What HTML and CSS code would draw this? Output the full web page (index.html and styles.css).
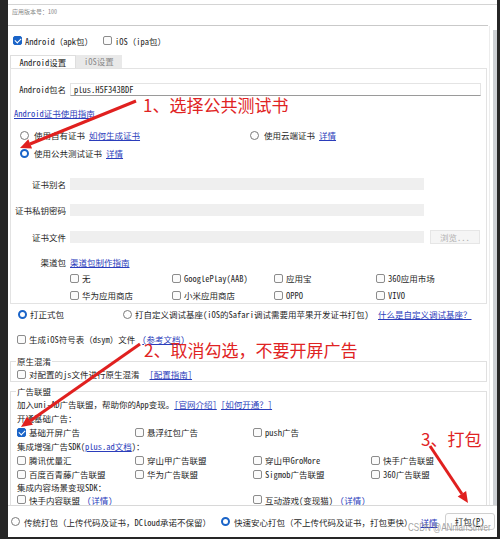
FILE: index.html
```html
<!DOCTYPE html>
<html>
<head>
    <meta charset="utf-8">
    <link rel="stylesheet" href="styles.css">
</head>
<body>
<div class="screen">
    <div class="dialog">
        <div class="top-edge"></div>
        <div class="version">应用版本号：100</div>

        <div class="scroll-area">
            <div class="scroll-content">
                <div class="platforms">
                    <span class="opt"><span class="cb on"></span>Android（apk包）</span>
                    <span class="opt"><span class="cb"></span>iOS（ipa包）</span>
                </div>

                <div class="tabs">
                    <div class="tab active">Android设置</div>
                    <div class="tab">iOS设置</div>
                </div>

                <div class="panel">
                    <div class="field">
                        <span class="flabel">Android包名</span>
                        <span class="input">plus.H5F343BDF</span>
                    </div>

                    <div class="guide"><a class="link">Android证书使用指南</a></div>

                    <div class="cert-row first">
                        <span class="opt wide"><span class="rd"></span>使用自有证书 <a class="link">如何生成证书</a></span>
                        <span class="opt"><span class="rd"></span>使用云端证书 <a class="link">详情</a></span>
                    </div>
                    <div class="cert-row second">
                        <span class="opt"><span class="rd on"></span>使用公共测试证书 <a class="link">详情</a></span>
                    </div>

                    <div class="field off alias">
                        <span class="flabel">证书别名</span>
                        <span class="input disabled"></span>
                    </div>
                    <div class="field off pwd">
                        <span class="flabel">证书私钥密码</span>
                        <span class="input disabled"></span>
                    </div>
                    <div class="field off file">
                        <span class="flabel">证书文件</span>
                        <span class="input disabled"></span>
                        <span class="btn-browse">浏览...</span>
                    </div>

                    <div class="field channel">
                        <span class="flabel">渠道包</span>
                        <a class="link">渠道包制作指南</a>
                    </div>
                    <div class="channels">
                        <span class="opt"><span class="cb"></span>无</span>
                        <span class="opt"><span class="cb"></span>GooglePlay(AAB)</span>
                        <span class="opt"><span class="cb"></span>应用宝</span>
                        <span class="opt"><span class="cb"></span>360应用市场</span>
                        <span class="opt"><span class="cb"></span>华为应用商店</span>
                        <span class="opt"><span class="cb"></span>小米应用商店</span>
                        <span class="opt"><span class="cb"></span>OPPO</span>
                        <span class="opt"><span class="cb"></span>VIVO</span>
                    </div>
                </div>

                <div class="build-row">
                    <span class="opt release"><span class="rd on"></span>打正式包</span>
                    <span class="opt custom"><span class="rd"></span>打自定义调试基座(iOS的Safari调试需要用苹果开发证书打包)</span>
                    <a class="link">什么是自定义调试基座？</a>
                </div>

                <div class="dsym-row">
                    <span class="opt"><span class="cb"></span>生成iOS符号表（dsym）文件</span>
                    <a class="link">(参考文档)</a>
                </div>

                <fieldset class="group obfuscate">
                    <legend>原生混淆</legend>
                    <div class="line">
                        <span class="opt"><span class="cb"></span>对配置的js文件进行原生混淆</span>
                        <a class="link">[配置指南]</a>
                    </div>
                </fieldset>

                <fieldset class="group ads">
                    <legend>广告联盟</legend>
                    <div class="line">加入uni-AD广告联盟，帮助你的App变现。<a class="link">[官网介绍]</a> <a class="link">[如何开通？]</a></div>
                    <div class="line">开通基础广告：</div>
                    <div class="ad-grid">
                        <span class="opt"><span class="cb on"></span>基础开屏广告</span>
                        <span class="opt"><span class="cb"></span>悬浮红包广告</span>
                        <span class="opt"><span class="cb"></span>push广告</span>
                    </div>
                    <div class="line">集成增强广告SDK(<a class="link">plus.ad文档</a>)：</div>
                    <div class="ad-grid">
                        <span class="opt"><span class="cb"></span>腾讯优量汇</span>
                        <span class="opt"><span class="cb"></span>穿山甲广告联盟</span>
                        <span class="opt"><span class="cb"></span>穿山甲GroMore</span>
                        <span class="opt"><span class="cb"></span>快手广告联盟</span>
                        <span class="opt"><span class="cb"></span>百度百青藤广告联盟</span>
                        <span class="opt"><span class="cb"></span>华为广告联盟</span>
                        <span class="opt"><span class="cb"></span>Sigmob广告联盟</span>
                        <span class="opt"><span class="cb"></span>360广告联盟</span>
                    </div>
                    <div class="line sdk">集成内容场景变现SDK：</div>
                    <div class="ad-grid last">
                        <span class="opt span2"><span class="cb"></span>快手内容联盟 <a class="link paren">(详情)</a></span>
                        <span class="opt span2"><span class="cb"></span>互动游戏(变现猫) <a class="link paren">(详情)</a></span>
                    </div>
                </fieldset>
            </div>
            <div class="scrollbar"><div class="thumb"></div></div>
        </div>

        <div class="bottom-bar">
            <span class="opt"><span class="rd"></span>传统打包（上传代码及证书，DCloud承诺不保留）</span>
            <span class="opt fast"><span class="rd on"></span>快速安心打包（不上传代码及证书，打包更快）</span>
            <a class="link detail">详情</a>
            <span class="btn-pack">打包(<u>P</u>)</span>
        </div>
    </div>

    <!-- annotations drawn over the screenshot -->
    <svg class="arrows" width="500" height="539" viewBox="0 0 500 539">
        <line x1="136" y1="101" x2="30" y2="144"/>
        <polygon points="20,148 32.1,148.5 28.3,139.3"/>
        <line x1="140" y1="344" x2="30" y2="421"/>
        <polygon points="21,427 32.9,424.8 27.1,416.6"/>
        <line x1="430" y1="446" x2="462" y2="494"/>
        <polygon points="468,503 457.7,496.6 466.1,491"/>
    </svg>
    <div class="note note-1">1、选择公共测试书</div>
    <div class="note note-2">2、取消勾选，不要开屏广告</div>
    <div class="note note-3">3、打包</div>
    <div class="watermark">CSDN @ANnianStriver</div>
</div>
</body>
</html>
```

FILE: styles.css
```css
* {
    box-sizing: border-box;
}

body {
    margin: 0;
    background: #262626;
    font-family: "Noto Sans Mono CJK SC", "Liberation Serif", "Noto Sans CJK SC", sans-serif;
    font-size: 8.5px;
    line-height: 12px;
    color: #1f1f1f;
}

.screen {
    position: relative;
    width: 500px;
    height: 539px;
    overflow: hidden;
}

.dialog {
    margin-left: 8px;
    width: 489px;
    height: 537px;
    background: #fff;
    display: flex;
    flex-direction: column;
}

.top-edge {
    height: 5px;
    flex: none;
    border-bottom: 1px solid #d4d4d4;
}

.version {
    height: 21px;
    width: 480px;
    flex: none;
    padding: 3px 0 0 4px;
    border-bottom: 1px solid #c9c9c9;
    font-size: 6px;
    line-height: 8px;
    color: #8a8a8a;
}

.scroll-area {
    display: flex;
    height: 479px;
    flex: none;
}

.scroll-content {
    width: 481px;
    overflow: hidden;
}

.scrollbar {
    width: 8px;
    padding-top: 4px;
    border-left: 1px solid #ececec;
    display: flex;
    justify-content: flex-end;
}

.thumb {
    width: 4px;
    height: 100%;
    background: #cdd0d4;
}

/* generic controls */
.opt {
    display: inline-flex;
    align-items: center;
    gap: 3px;
    white-space: nowrap;
}

.cb {
    position: relative;
    flex: none;
    width: 9px;
    height: 9px;
    border: 1px solid #8c8c8c;
    border-radius: 2px;
    background: #fbfbfb;
}

.cb.on {
    background: #1a64c8;
    border-color: #1a64c8;
}

.cb.on::after {
    content: "";
    position: absolute;
    left: 2.3px;
    top: 0.3px;
    width: 3px;
    height: 5px;
    border: solid #fff;
    border-width: 0 1.3px 1.3px 0;
    transform: rotate(45deg);
}

.rd {
    flex: none;
    width: 9px;
    height: 9px;
    border: 1px solid #7b7b7b;
    border-radius: 50%;
    background: #fff;
    margin-right: 1px;
}

.rd.on {
    border: 2.7px solid #1a64c8;
}

.link {
    color: #2b3dbb;
    text-decoration: underline;
}

/* platform checkboxes */
.platforms {
    height: 29px;
    display: flex;
    align-items: center;
    gap: 10px;
    padding-left: 5px;
}

/* tabs */
.tabs {
    display: flex;
    height: 13px;
    margin-left: 2px;
}

.tab {
    width: 46px;
    height: 13px;
    line-height: 12px;
    text-align: center;
    background: #e9e9e9;
    color: #8a8a8a;
}

.tab.active {
    width: 66px;
    background: #fff;
    color: #222;
    border: 1px solid #dedede;
    border-bottom: none;
}

.panel {
    width: 477px;
    margin-left: 2px;
    padding: 13px 0 2px 0;
    border: 1px solid #e3e3e3;
}

.field {
    display: flex;
    align-items: center;
    gap: 4px;
    height: 14px;
}

.flabel {
    flex: none;
    width: 55px;
    text-align: right;
}

.input {
    width: 411px;
    height: 13px;
    padding-left: 3px;
    border: 1px solid #e4e4e4;
    border-bottom-color: #9a9a9a;
    line-height: 11px;
}

.input.disabled {
    width: 354px;
    height: 12px;
    border: none;
    background: #efefef;
}

.field.off {
    height: 12px;
}

.field.alias { margin-top: 19px; }
.field.pwd { margin-top: 14px; }
.field.file { margin-top: 14px; height: 14px; }
.field.channel { margin-top: 12px; height: 12px; }

.btn-browse {
    width: 50px;
    height: 14px;
    margin-left: 2px;
    border: 1px solid #e6e6e6;
    background: #f5f5f5;
    color: #b0b0b0;
    text-align: center;
    line-height: 12px;
}

.guide {
    margin-top: 11px;
    padding-left: 3px;
}

.cert-row {
    display: flex;
    padding-left: 9px;
}

.cert-row .opt {
    gap: 4px;
}

.cert-row.first { margin-top: 10px; }
.cert-row.second { margin-top: 6px; }

.cert-row .wide {
    width: 230px;
}

.channels {
    display: grid;
    grid-template-columns: repeat(4, 102px);
    row-gap: 5px;
    margin: 4px 0 0 59px;
}

/* build type */
.build-row {
    display: flex;
    align-items: center;
    margin-top: 4px;
    padding-left: 10px;
}

.build-row .opt {
    gap: 2px;
}

.build-row .release { width: 105px; }
.build-row .custom { width: 255px; }

.dsym-row {
    display: flex;
    gap: 7px;
    margin-top: 13px;
    padding-left: 9px;
}

/* group boxes */
.group {
    width: 477px;
    margin: 0 0 0 2px;
    padding: 0 6px;
    border: 1px solid #e0e0e0;
    min-width: 0;
}

.group legend {
    padding: 0 1px;
    margin-left: -1px;
    line-height: 10px;
}

.group.obfuscate {
    margin-top: 11px;
    padding-top: 2px;
    padding-bottom: 1px;
}

.group.obfuscate .line {
    display: flex;
    gap: 10px;
}

.group.ads {
    margin-top: 4px;
    padding-top: 1px;
}

.ads .line {
    line-height: 14px;
    white-space: nowrap;
}

.ads .line.sdk {
    line-height: 13px;
}

.ad-grid {
    display: grid;
    grid-template-columns: repeat(4, 118px);
    grid-auto-rows: 14px;
    align-items: center;
}

.ad-grid.last {
    grid-auto-rows: 11px;
    line-height: 10px;
}

.ad-grid .span2 {
    grid-column: span 2;
}

.ad-grid .paren {
    margin-left: 4px;
}

/* bottom bar */
.bottom-bar {
    flex: none;
    height: 32px;
    display: flex;
    align-items: center;
    padding-left: 3px;
    border-top: 1px solid #d8d8d8;
}

.bottom-bar .opt {
    gap: 3px;
}

.bottom-bar .fast {
    margin-left: 10px;
}

.bottom-bar .detail {
    margin-left: 8px;
}

.btn-pack {
    width: 50px;
    height: 17px;
    margin-left: 7px;
    border: 1px solid #cfcfcf;
    border-radius: 3px;
    background: #fdfdfd;
    text-align: center;
    line-height: 15px;
}

/* red annotations over the screenshot */
.arrows {
    position: absolute;
    left: 0;
    top: 0;
    pointer-events: none;
}

.arrows line {
    stroke: #e0201f;
    stroke-width: 3;
}

.arrows polygon {
    fill: #e0201f;
}

.note {
    position: absolute;
    font-family: "Noto Sans CJK SC", sans-serif;
    font-size: 17px;
    line-height: 17px;
    color: #e02323;
    white-space: nowrap;
}

.note-1 { left: 143px; top: 96px; }
.note-2 { left: 144px; top: 341px; }
.note-3 { left: 421px; top: 430px; }

.watermark {
    position: absolute;
    left: 408px;
    top: 521px;
    font-family: "Liberation Sans", sans-serif;
    font-size: 11px;
    line-height: 13px;
    color: rgba(140, 140, 140, 0.8);
    transform: scaleX(0.73);
    transform-origin: left center;
    white-space: nowrap;
}
```
